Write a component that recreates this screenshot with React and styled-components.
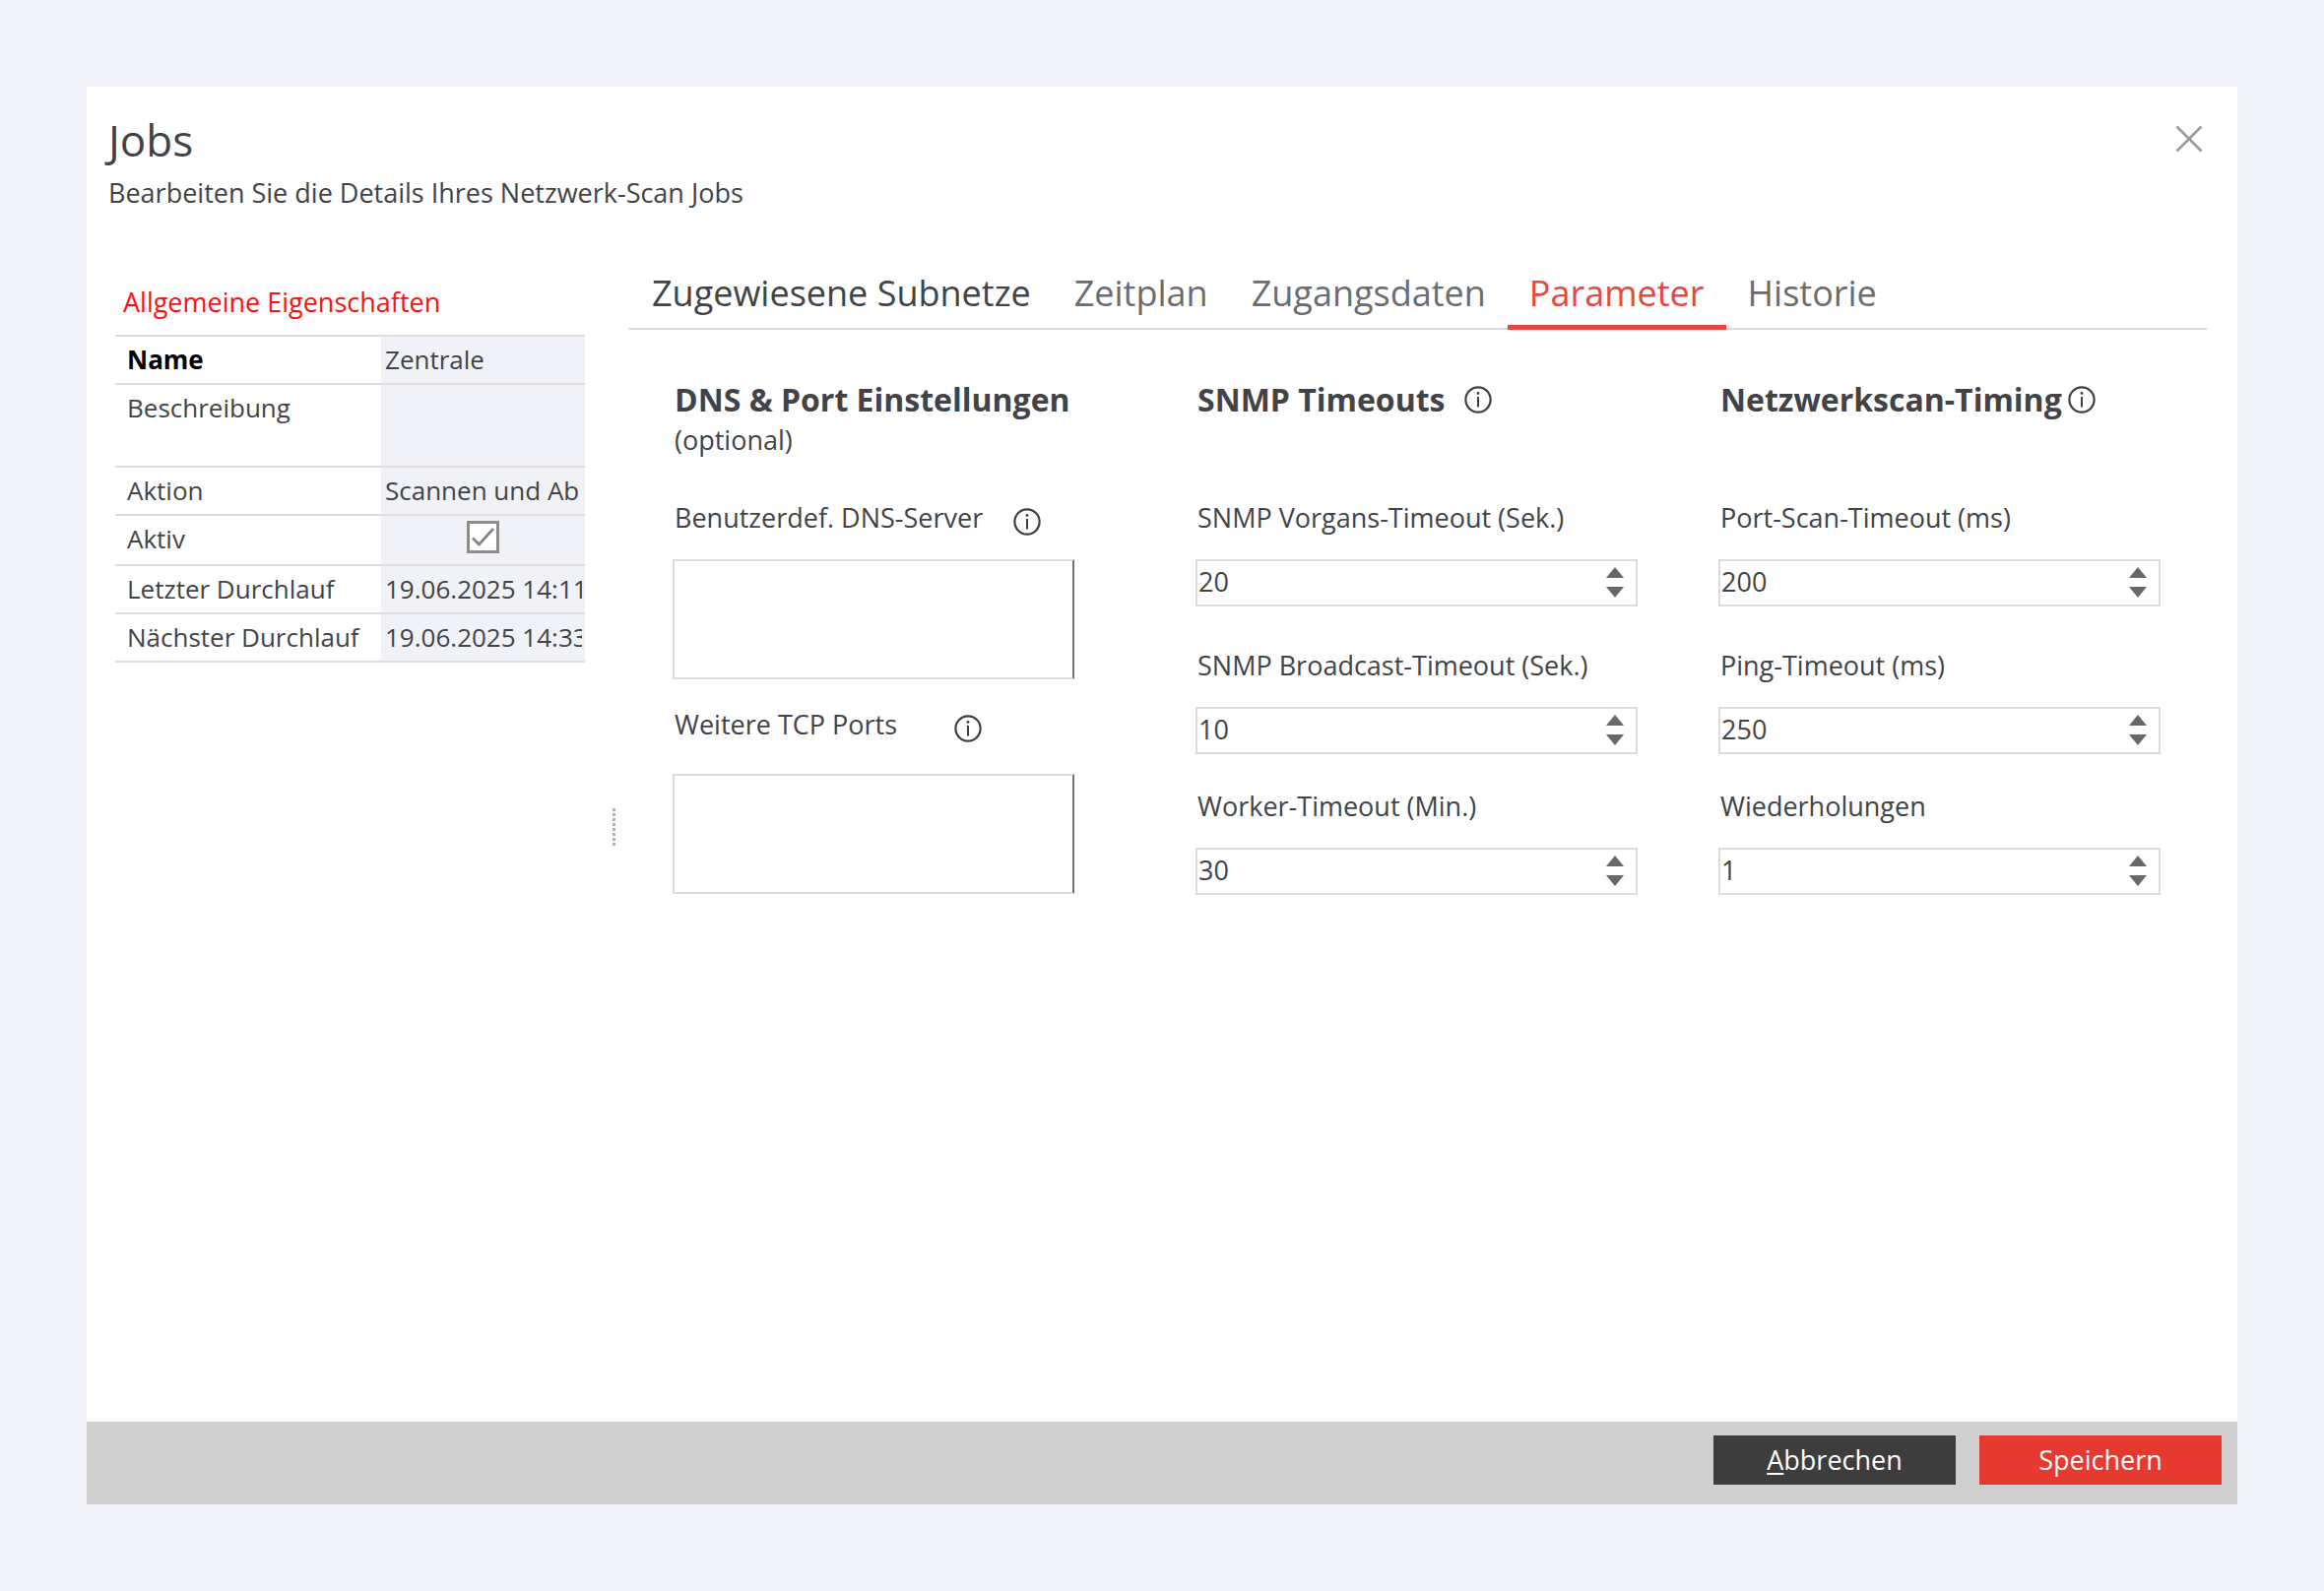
import React, { useState } from "react";
import styled, { createGlobalStyle } from "styled-components";

const GlobalStyle = createGlobalStyle`
  *, *::before, *::after { box-sizing: border-box; }
  body {
    margin: 0;
    background: #f4f5fa;
    color: #414346;
    font-family: "Open Sans", "Noto Sans", sans-serif;
    font-size: 27px;
    line-height: 36px;
  }
  button, input, textarea { font: inherit; color: inherit; }
`;

const Page = styled.div`
  min-height: 100vh;
  padding: 88px;
  display: flex;
`;

const Dialog = styled.section`
  flex: 1;
  min-width: 0;
  display: flex;
  flex-direction: column;
  background: #fff;
`;

const Header = styled.header`
  display: flex;
  justify-content: space-between;
  align-items: flex-start;
  padding: 26px 33px 0 22px;
`;

const Title = styled.h1`
  margin: 0;
  font-size: 44px;
  line-height: 56px;
  font-weight: 400;
`;

const Subtitle = styled.p`
  margin: 8px 0 0;
`;

const IconButton = styled.button`
  display: flex;
  padding: 0;
  border: 0;
  background: none;
  cursor: pointer;
`;

const CloseButton = styled(IconButton)`
  margin-top: 11px;
`;

const Body = styled.main`
  flex: 1;
  display: grid;
  grid-template-columns: 477px 44px minmax(0, 1fr);
  padding: 53px 31px 0 29px;
`;

const Sidebar = styled.aside`
  padding-top: 22px;
`;

const SidebarTitle = styled.h2`
  margin: 0;
  padding: 0 8px 15px;
  font-size: 27px;
  line-height: 36px;
  font-weight: 400;
  color: #ff1010;
`;

const PropertyTable = styled.table`
  width: 100%;
  table-layout: fixed;
  border-collapse: collapse;
  border-top: 2px solid #dedede;
`;

const PropertyRow = styled.tr`
  height: ${(p) => (p.$tall ? 84 : 49)}px;
  border-bottom: 2px solid #dedede;
`;

const PropertyName = styled.th`
  width: 270px;
  padding: 5px 0 5px 12px;
  text-align: left;
  vertical-align: top;
  white-space: nowrap;
  font-weight: ${(p) => (p.$strong ? 700 : 400)};
  font-size: 26px;
  color: ${(p) => (p.$strong ? "#000" : "inherit")};
`;

const PropertyValue = styled.td`
  padding: 5px 3px 5px 4px;
  background: #f1f2f7;
  vertical-align: top;
  font-size: 26px;
`;

const Clip = styled.div`
  overflow: hidden;
  white-space: nowrap;
`;

const CheckWrap = styled.label`
  display: grid;
  justify-content: center;
  align-items: start;
  height: 39px;
  padding-right: 2px;
  & > * { grid-area: 1 / 1; }
  svg { pointer-events: none; }
`;

const CheckBox = styled.input`
  appearance: none;
  width: 33px;
  height: 33px;
  margin: 0;
  border: 3px solid #8c8c8c;
  background: #fff;
`;

const Splitter = styled.div`
  display: flex;
  flex-direction: column;
  gap: 2px;
  padding: 554px 0 0 28px;
`;

const Dot = styled.span`
  width: 3px;
  height: 3px;
  background: #b0b0b0;
`;

const Tabs = styled.div`
  display: flex;
  padding-left: 2px;
  border-bottom: 2px solid #dbdbdb;
`;

const Tab = styled.button`
  margin-bottom: -2px;
  padding: 6px 22px 7px;
  border: 0;
  border-bottom: 5px solid ${(p) => (p.$active ? "#e8463f" : "transparent")};
  background: none;
  font-size: 36px;
  line-height: 50px;
  white-space: nowrap;
  cursor: pointer;
  color: ${(p) => (p.$active ? "#e8463f" : p.$strong ? "#414346" : "#6a6c6f")};
`;

const Panel = styled.form`
  display: grid;
  grid-template-columns: repeat(3, minmax(0, 1fr));
  column-gap: 82px;
  padding: 48px 47px 0 45px;
`;

const Group = styled.section`
  min-width: 0;
`;

const GroupHead = styled.header`
  min-height: 125px;
  padding-left: 2px;
`;

const GroupTitleRow = styled.div`
  display: flex;
  align-items: center;
  gap: ${(p) => p.$gap}px;
`;

const GroupTitle = styled.h3`
  margin: 0;
  font-size: 32px;
  line-height: 46px;
  font-weight: 700;
  white-space: nowrap;
`;

const Field = styled.div`
  margin-bottom: ${(p) => p.$after || 0}px;
`;

const FieldHead = styled.div`
  display: flex;
  align-items: flex-end;
  gap: ${(p) => p.$gap || 0}px;
  padding: 0 0 ${(p) => p.$below || 24}px 2px;
  white-space: nowrap;
`;

const TextBox = styled.textarea`
  display: block;
  width: 408px;
  max-width: 100%;
  height: 122px;
  border: 2px solid #dcdcdc;
  border-right-color: #707070;
  border-radius: 0;
  background: #fff;
  resize: none;
  outline: none;
`;

const NumberBox = styled.div`
  display: flex;
  height: 48px;
  border: 2px solid #dcdcdc;
  background: #fff;
`;

const NumberInput = styled.input`
  flex: 1;
  min-width: 0;
  padding: 0 0 2px 1px;
  border: 0;
  background: none;
  outline: none;
  appearance: textfield;
  &::-webkit-inner-spin-button,
  &::-webkit-outer-spin-button { appearance: none; margin: 0; }
`;

const Steps = styled.div`
  display: flex;
  flex-direction: column;
  justify-content: center;
  gap: 9px;
  padding: 0 11px 1px 0;
`;

const Footer = styled.footer`
  display: flex;
  justify-content: flex-end;
  gap: 24px;
  padding: 14px 16px 20px;
  background: #cfcfcf;
`;

const Action = styled.button`
  width: 246px;
  height: 50px;
  padding: 0;
  border: 0;
  color: #fff;
  background: ${(p) => (p.$primary ? "#e63a30" : "#3d3d3d")};
  cursor: pointer;
`;

const AccessKey = styled.span`
  text-decoration: underline;
  text-underline-offset: 3px;
`;

function InfoIcon() {
  return (
    <svg width="28" height="28" viewBox="0 0 28 28" fill="none" stroke="#3d3f42" aria-hidden="true">
      <circle cx="14" cy="14" r="12.6" strokeWidth="2.2" />
      <path d="M14 11V21.5" strokeWidth="2" />
      <circle cx="14" cy="7.4" r="1.4" fill="#3d3f42" stroke="none" />
    </svg>
  );
}

function Info({ about }) {
  return (
    <IconButton type="button" aria-label={`Info: ${about}`}>
      <InfoIcon />
    </IconButton>
  );
}

function Step({ down, label, onClick }) {
  return (
    <IconButton type="button" aria-label={label} onClick={onClick}>
      <svg width="20" height="11" viewBox="0 0 20 11" aria-hidden="true">
        <path d={down ? "M1 0H19L10 11Z" : "M1 11H19L10 0Z"} fill="#686868" />
      </svg>
    </IconButton>
  );
}

function NumberField({ id, label, initial, after }) {
  const [value, setValue] = useState(initial);
  return (
    <Field $after={after}>
      <FieldHead>
        <label htmlFor={id}>{label}</label>
      </FieldHead>
      <NumberBox>
        <NumberInput id={id} type="number" value={value} onChange={(e) => setValue(Number(e.target.value))} />
        <Steps>
          <Step label="Erhöhen" onClick={() => setValue(value + 1)} />
          <Step down label="Verringern" onClick={() => setValue(value - 1)} />
        </Steps>
      </NumberBox>
    </Field>
  );
}

function TextField({ id, label, gap, below, after }) {
  return (
    <Field $after={after}>
      <FieldHead $gap={gap} $below={below}>
        <label htmlFor={id}>{label}</label>
        <Info about={label} />
      </FieldHead>
      <TextBox id={id} />
    </Field>
  );
}

function Property({ name, strong, tall, children }) {
  return (
    <PropertyRow $tall={tall}>
      <PropertyName scope="row" $strong={strong}>{name}</PropertyName>
      <PropertyValue>{children}</PropertyValue>
    </PropertyRow>
  );
}

const TABS = ["Zugewiesene Subnetze", "Zeitplan", "Zugangsdaten", "Parameter", "Historie"];

export default function App() {
  const [tab, setTab] = useState("Parameter");
  const [active, setActive] = useState(true);

  return (
    <>
      <GlobalStyle />
      <Page>
        <Dialog role="dialog" aria-labelledby="dialog-title">
          <Header>
            <div>
              <Title id="dialog-title">Jobs</Title>
              <Subtitle>Bearbeiten Sie die Details Ihres Netzwerk-Scan Jobs</Subtitle>
            </div>
            <CloseButton type="button" aria-label="Schließen">
              <svg width="32" height="32" viewBox="0 0 32 32" fill="none" stroke="#9a9a9a" strokeWidth="2.6" aria-hidden="true">
                <path d="M3.5 3.5L28.5 28.5M28.5 3.5L3.5 28.5" />
              </svg>
            </CloseButton>
          </Header>

          <Body>
            <Sidebar>
              <SidebarTitle>Allgemeine Eigenschaften</SidebarTitle>
              <PropertyTable>
                <tbody>
                  <Property name="Name" strong><Clip>Zentrale</Clip></Property>
                  <Property name="Beschreibung" tall />
                  <Property name="Aktion"><Clip>Scannen und Ab</Clip></Property>
                  <Property name="Aktiv">
                    <CheckWrap>
                      <CheckBox type="checkbox" aria-label="Aktiv" checked={active} onChange={() => setActive(!active)} />
                      {active && (
                        <svg width="33" height="33" viewBox="0 0 33 33" fill="none" stroke="#868686" strokeWidth="2.8" aria-hidden="true">
                          <path d="M6 17.5L12.5 24L27 8" />
                        </svg>
                      )}
                    </CheckWrap>
                  </Property>
                  <Property name="Letzter Durchlauf"><Clip>19.06.2025 14:11</Clip></Property>
                  <Property name="Nächster Durchlauf"><Clip>19.06.2025 14:33</Clip></Property>
                </tbody>
              </PropertyTable>
            </Sidebar>

            <Splitter role="separator" aria-orientation="vertical">
              {Array.from({ length: 8 }, (_, i) => <Dot key={i} />)}
            </Splitter>

            <div>
              <Tabs role="tablist">
                {TABS.map((name, i) => (
                  <Tab key={name} type="button" role="tab" aria-selected={tab === name} $active={tab === name} $strong={i === 0} onClick={() => setTab(name)}>
                    {name}
                  </Tab>
                ))}
              </Tabs>
              <Panel>
                <Group>
                  <GroupHead>
                    <GroupTitle>DNS &amp; Port Einstellungen</GroupTitle>
                    <div>(optional)</div>
                  </GroupHead>
                  <TextField id="dns" label="Benutzerdef. DNS-Server" gap={31} after={28} />
                  <TextField id="ports" label="Weitere TCP Ports" gap={58} below={32} />
                </Group>
                <Group>
                  <GroupHead>
                    <GroupTitleRow $gap={20}>
                      <GroupTitle>SNMP Timeouts</GroupTitle>
                      <Info about="SNMP Timeouts" />
                    </GroupTitleRow>
                  </GroupHead>
                  <NumberField id="snmp-op" label="SNMP Vorgans-Timeout (Sek.)" initial={20} after={42} />
                  <NumberField id="snmp-bc" label="SNMP Broadcast-Timeout (Sek.)" initial={10} after={35} />
                  <NumberField id="worker" label="Worker-Timeout (Min.)" initial={30} />
                </Group>
                <Group>
                  <GroupHead>
                    <GroupTitleRow $gap={6}>
                      <GroupTitle>Netzwerkscan-Timing</GroupTitle>
                      <Info about="Netzwerkscan-Timing" />
                    </GroupTitleRow>
                  </GroupHead>
                  <NumberField id="port-scan" label="Port-Scan-Timeout (ms)" initial={200} after={42} />
                  <NumberField id="ping" label="Ping-Timeout (ms)" initial={250} after={35} />
                  <NumberField id="retries" label="Wiederholungen" initial={1} />
                </Group>
              </Panel>
            </div>
          </Body>

          <Footer>
            <Action type="button"><AccessKey>A</AccessKey>bbrechen</Action>
            <Action type="button" $primary>Speichern</Action>
          </Footer>
        </Dialog>
      </Page>
    </>
  );
}
